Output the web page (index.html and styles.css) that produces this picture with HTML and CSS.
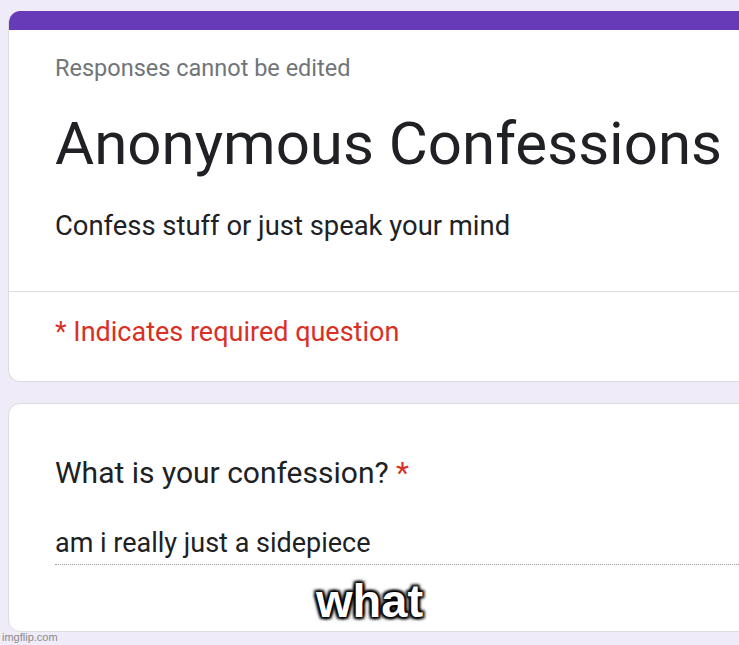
FILE: index.html
```html
<!DOCTYPE html>
<html>
<head>
<meta charset="utf-8">
<link rel="stylesheet" href="styles.css">
</head>
<body>
<div class="page">
  <section class="card header-card">
    <div class="bar"></div>
    <div class="header-body">
      <div class="notice">Responses cannot be edited</div>
      <h1 class="title">Anonymous Confessions</h1>
      <div class="desc">Confess stuff or just speak your mind</div>
    </div>
    <div class="required-row">
      <span class="req">* Indicates required question</span>
    </div>
  </section>
  <section class="card question-card">
    <div class="question">What is your confession? <span class="star">*</span></div>
    <div class="answer">am i really just a sidepiece</div>
  </section>
</div>
<div class="caption">what</div>
<div class="watermark">imgflip.com</div>
</body>
</html>
```
FILE: styles.css
```css
html, body {
  margin: 0;
  padding: 0;
}
body {
  width: 739px;
  height: 645px;
  overflow: hidden;
  background: #f0ebf8;
  font-family: Roboto, "Liberation Sans", Arial, sans-serif;
  color: #202124;
  position: relative;
}
.page {
  padding-top: 11px;
  padding-left: 8px;
  display: flex;
  flex-direction: column;
  gap: 21px;
}
.card {
  width: 790px;
  background: #fff;
  border: 1px solid #dadce0;
  border-radius: 12px;
  box-sizing: border-box;
  overflow: hidden;
}
.header-card {
  border-top: none;
}
.bar {
  height: 19px;
  background: #673ab7;
}
.header-body {
  padding: 23px 0 48px 46px;
  border-bottom: 1px solid #dadce0;
}
.notice {
  font-size: 23.5px;
  line-height: 30px;
  color: #70757a;
}
.title {
  margin: 26px 0 0 0;
  font-size: 60px;
  line-height: 70px;
  font-weight: 400;
  color: #202124;
}
.desc {
  margin-top: 30px;
  font-size: 27.4px;
  line-height: 34px;
  color: #202124;
}
.required-row {
  padding: 23px 0 32px 46px;
}
.req {
  font-size: 27px;
  line-height: 34px;
  color: #d93025;
  display: block;
}
.question-card {
  padding: 50px 0 66px 46px;
}
.question {
  font-size: 30px;
  line-height: 38px;
  color: #202124;
}
.star {
  color: #d93025;
}
.answer {
  margin-top: 34px;
  font-size: 27px;
  line-height: 34px;
  padding-bottom: 4px;
  border-bottom: 1px dotted #9aa0a6;
  color: #202124;
}
.caption {
  position: absolute;
  left: 0;
  top: 574px;
  width: 739px;
  text-align: center;
  font-family: "Liberation Sans", Arial, sans-serif;
  font-weight: 700;
  font-size: 47px;
  line-height: 54px;
  color: #fff;
  text-shadow: 0 0 2px #000, 0 0 3px #000, 2px 2px 3px #000, -2px -2px 3px #000, 2px -2px 3px #000, -2px 2px 3px #000;
}
.watermark {
  position: absolute;
  left: 2px;
  bottom: 1px;
  font-family: "Liberation Sans", Arial, sans-serif;
  font-size: 11px;
  line-height: 13px;
  color: #8a8a8a;
}
```
